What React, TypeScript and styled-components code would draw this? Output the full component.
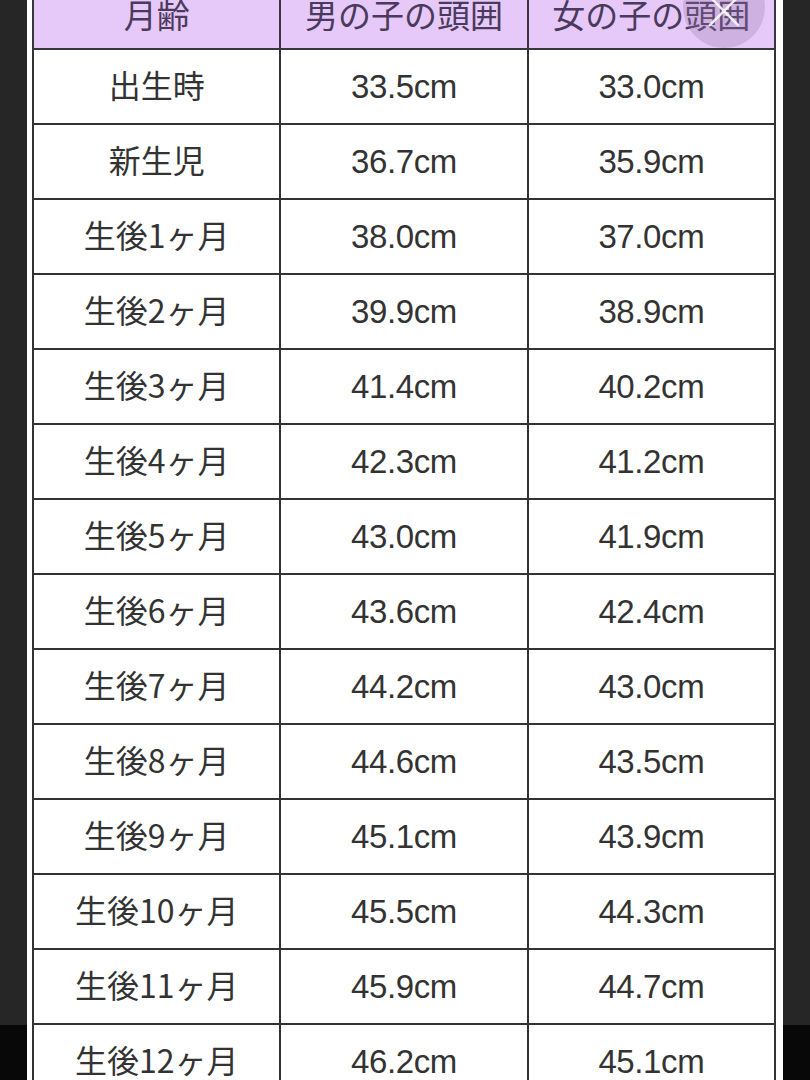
import styled, { createGlobalStyle } from "styled-components";

const GlobalStyle = createGlobalStyle`
  html, body {
    margin: 0;
    padding: 0;
    height: 1080px;
    overflow: hidden;
    background: linear-gradient(to bottom, #262626 0, #262626 1025px, #080808 1025px);
  }
  body {
    font-family: "Liberation Sans", "Noto Sans CJK JP", sans-serif;
  }
`;

const Page = styled.div`
  position: relative;
  width: 810px;
  height: 1080px;
  overflow: hidden;
`;

const Sheet = styled.div`
  margin-left: 27px;
  width: 756px;
  padding: 0 5px;
  box-sizing: border-box;
  background: #ffffff;
  margin-top: -30px;
`;

const Table = styled.table`
  border-collapse: collapse;
  width: 744px;
  table-layout: fixed;
`;

const HeadCell = styled.th`
  height: 68px;
  background: #e7c9f9;
  color: #4a3a5c;
  font-family: "Noto Sans CJK JP", sans-serif;
  font-weight: 400;
  font-size: 33px;
  line-height: 1;
  border: 2px solid #3a3640;
  padding: 8px 0 0;
  vertical-align: middle;
`;

const Cell = styled.td<{ $label?: boolean }>`
  height: ${(p) => (p.$label ? "67px" : "72px")};
  padding: ${(p) => (p.$label ? "0 0 6px" : "0 0 1px")};
  text-align: center;
  vertical-align: middle;
  border: 2px solid #333333;
  color: #333333;
  font-size: ${(p) => (p.$label ? "32px" : "33px")};
  font-family: ${(p) =>
    p.$label
      ? `"Noto Sans CJK JP", sans-serif`
      : `"Liberation Sans", Arial, sans-serif`};
  line-height: 1;
  letter-spacing: ${(p) => (p.$label ? "0" : "-0.4px")};
`;

const CloseButton = styled.div`
  position: absolute;
  top: -34px;
  left: 683px;
  width: 82px;
  height: 82px;
  border-radius: 50%;
  background: rgba(150, 120, 170, 0.3);
  display: flex;
  align-items: flex-end;
  justify-content: center;
  padding-bottom: 20px;
  box-sizing: border-box;
`;

const rows: [string, string, string][] = [
  ["出生時", "33.5cm", "33.0cm"],
  ["新生児", "36.7cm", "35.9cm"],
  ["生後1ヶ月", "38.0cm", "37.0cm"],
  ["生後2ヶ月", "39.9cm", "38.9cm"],
  ["生後3ヶ月", "41.4cm", "40.2cm"],
  ["生後4ヶ月", "42.3cm", "41.2cm"],
  ["生後5ヶ月", "43.0cm", "41.9cm"],
  ["生後6ヶ月", "43.6cm", "42.4cm"],
  ["生後7ヶ月", "44.2cm", "43.0cm"],
  ["生後8ヶ月", "44.6cm", "43.5cm"],
  ["生後9ヶ月", "45.1cm", "43.9cm"],
  ["生後10ヶ月", "45.5cm", "44.3cm"],
  ["生後11ヶ月", "45.9cm", "44.7cm"],
  ["生後12ヶ月", "46.2cm", "45.1cm"],
];

export default function App() {
  return (
    <Page>
      <GlobalStyle />
      <Sheet>
        <Table>
          <thead>
            <tr>
              <HeadCell>月齢</HeadCell>
              <HeadCell>男の子の頭囲</HeadCell>
              <HeadCell>女の子の頭囲</HeadCell>
            </tr>
          </thead>
          <tbody>
            {rows.map(([age, boy, girl]) => (
              <tr key={age}>
                <Cell $label>{age}</Cell>
                <Cell>{boy}</Cell>
                <Cell>{girl}</Cell>
              </tr>
            ))}
          </tbody>
        </Table>
      </Sheet>
      <CloseButton>
        <svg width="34" height="34" viewBox="0 0 34 34">
          <path d="M3 3 L31 31 M31 3 L3 31" stroke="#ffffff" strokeOpacity="0.85" strokeWidth="2.5" strokeLinecap="round" />
        </svg>
      </CloseButton>
    </Page>
  );
}
